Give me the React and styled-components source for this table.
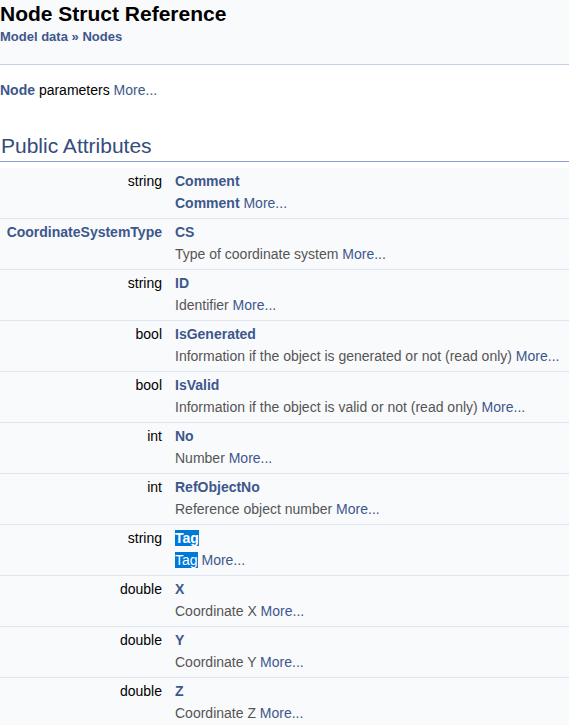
import React from "react";
import styled, { createGlobalStyle } from "styled-components";

const GlobalStyle = createGlobalStyle`
  body {
    margin: 0;
    background: #ffffff;
    font-family: "Liberation Sans", Arial, sans-serif;
    font-size: 14px;
    color: #000000;
  }
`;

const Header = styled.div`
  background: #f9fafc;
  border-bottom: 1px solid #c4cfe5;
  height: 64px;
`;

const Title = styled.div`
  font-size: 21px;
  font-weight: bold;
  line-height: 27px;
`;

const Ingroups = styled.div`
  font-size: 13px;
  font-weight: bold;
  line-height: 20px;
  color: #3d578c;

  & a {
    color: #3d578c;
    text-decoration: none;
  }
`;

const Contents = styled.div`
  padding-top: 14px;
`;

const Brief = styled.p`
  margin: 0;
  line-height: 22px;
`;

const Link = styled.a`
  color: #3d578c;
  text-decoration: none;
  font-weight: ${(p) => (p.$bold ? "bold" : "normal")};
`;

const GroupHeader = styled.h2`
  margin: 33px 0 0 0;
  padding: 0 0 3px 1px;
  font-size: 21px;
  font-weight: normal;
  line-height: 24px;
  color: #354c7b;
  border-bottom: 1px solid #879ecb;
`;

const MemberList = styled.div`
  margin-top: 6px;
`;

const Member = styled.div`
  display: grid;
  grid-template-columns: 168px 1fr;
  grid-template-rows: 22px 22px;
  background: #f9fafc;
  padding: 2px 0 4px 0;
  border-bottom: 1px solid #dee4f0;
  line-height: 22px;
`;

const TypeCell = styled.div`
  text-align: right;
  padding: 0 6px 0 6px;
  white-space: nowrap;
`;

const NameCell = styled.div`
  padding-left: 7px;
  white-space: nowrap;
`;

const DescCell = styled.div`
  grid-column: 2;
  padding-left: 7px;
  color: #555555;
  white-space: nowrap;
`;

const Selected = styled.span`
  background: #0078d7;
  color: #ffffff;
  font-weight: ${(p) => (p.$bold ? "bold" : "normal")};
`;

const members = [
  { type: "string", name: "Comment", desc: null, self: true },
  { type: "CoordinateSystemType", typeLink: true, name: "CS", desc: "Type of coordinate system" },
  { type: "string", name: "ID", desc: "Identifier" },
  { type: "bool", name: "IsGenerated", desc: "Information if the object is generated or not (read only)" },
  { type: "bool", name: "IsValid", desc: "Information if the object is valid or not (read only)" },
  { type: "int", name: "No", desc: "Number" },
  { type: "int", name: "RefObjectNo", desc: "Reference object number" },
  { type: "string", name: "Tag", desc: null, selected: true },
  { type: "double", name: "X", desc: "Coordinate X" },
  { type: "double", name: "Y", desc: "Coordinate Y" },
  { type: "double", name: "Z", desc: "Coordinate Z" },
];

const MemberItem = ({ m }) => (
  <Member>
    <TypeCell>
      {m.typeLink ? <Link $bold href="#">{m.type}</Link> : m.type}
    </TypeCell>
    <NameCell>
      {m.selected ? (
        <Selected $bold>{m.name}</Selected>
      ) : (
        <Link $bold href="#">{m.name}</Link>
      )}
    </NameCell>
    <DescCell>
      {m.self && <Link $bold href="#">{m.name}</Link>}
      {m.selected && <Selected>{m.name}</Selected>}
      {m.desc}
      {" "}
      <Link href="#">More...</Link>
    </DescCell>
  </Member>
);

const App = () => (
  <>
    <GlobalStyle />
    <Header>
      <Title>Node Struct Reference</Title>
      <Ingroups>
        <a href="#">Model data</a> » <a href="#">Nodes</a>
      </Ingroups>
    </Header>
    <Contents>
      <Brief>
        <Link $bold href="#">Node</Link> parameters <Link href="#">More...</Link>
      </Brief>
      <GroupHeader>Public Attributes</GroupHeader>
      <MemberList>
        {members.map((m) => (
          <MemberItem key={m.name} m={m} />
        ))}
      </MemberList>
    </Contents>
  </>
);

export default App;
